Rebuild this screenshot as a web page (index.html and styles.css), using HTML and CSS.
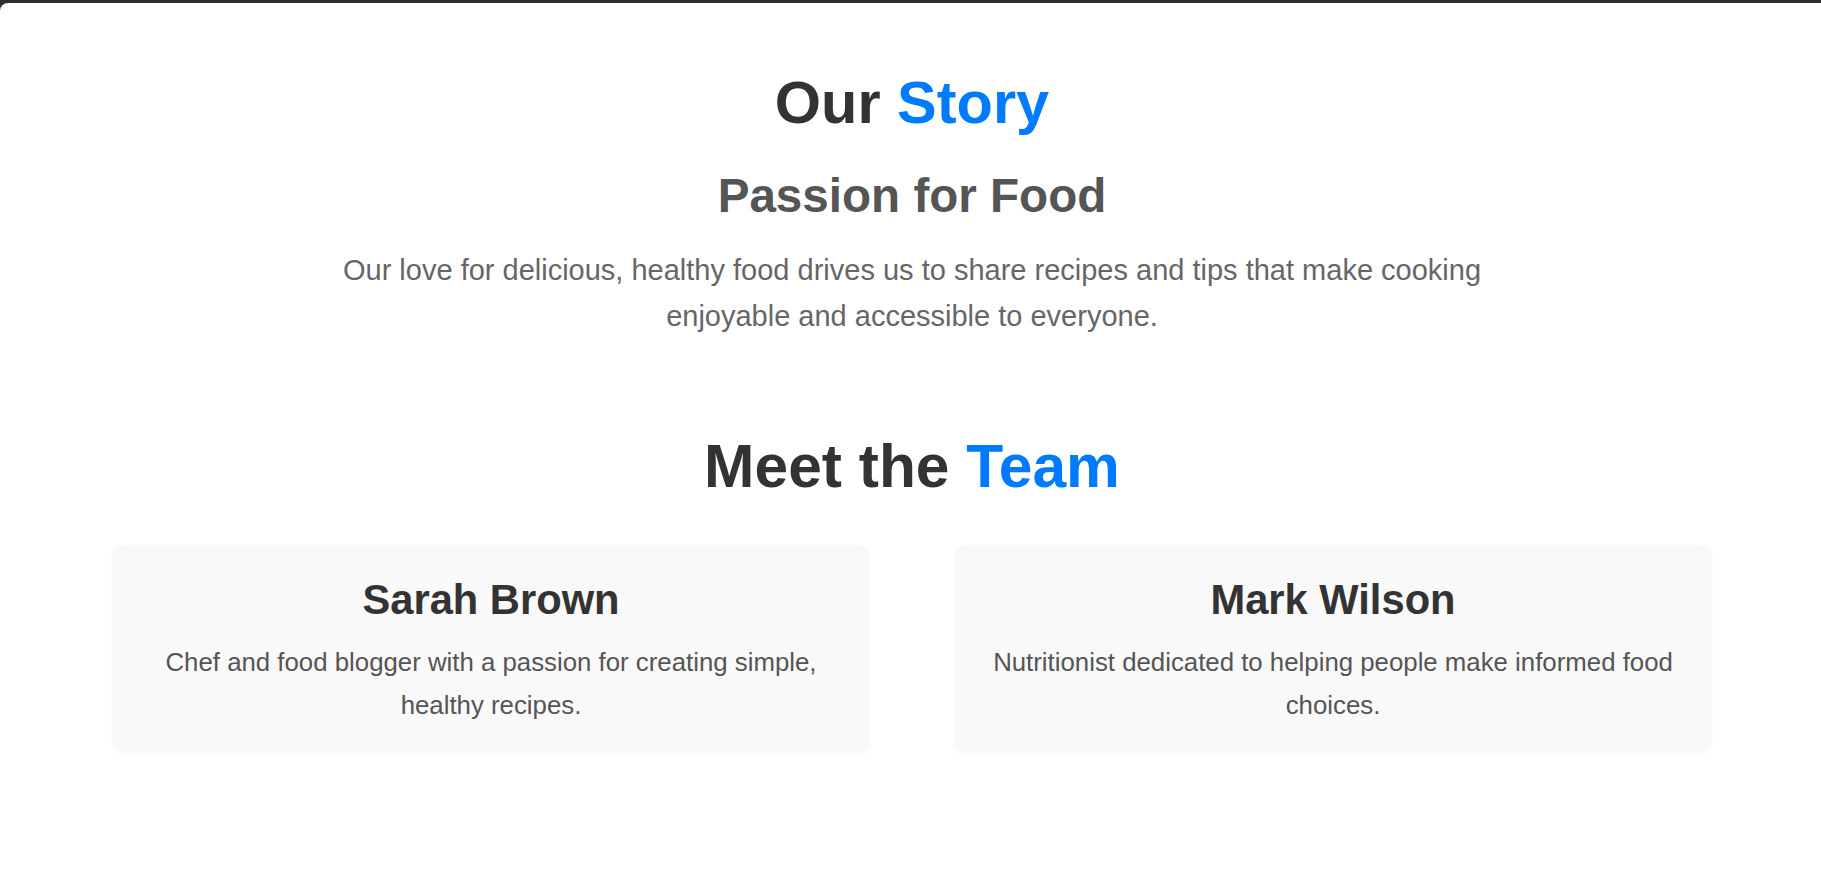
FILE: index.html
```html
<!DOCTYPE html>
<html lang="en">
<head>
<meta charset="utf-8">
<title>About Us</title>
<link rel="stylesheet" href="styles.css">
</head>
<body>
<main class="page">
  <section class="story">
    <h1 class="title">Our <span class="accent">Story</span></h1>
    <h2 class="subtitle">Passion for Food</h2>
    <p class="lead">Our love for delicious, healthy food drives us to share recipes and tips that make cooking enjoyable and accessible to everyone.</p>
  </section>
  <section class="team">
    <h1 class="title title-team">Meet the <span class="accent">Team</span></h1>
    <div class="team-grid">
      <div class="card">
        <h3 class="card-name">Sarah Brown</h3>
        <p class="card-text">Chef and food blogger with a passion for creating simple, healthy recipes.</p>
      </div>
      <div class="card">
        <h3 class="card-name">Mark Wilson</h3>
        <p class="card-text">Nutritionist dedicated to helping people make informed food choices.</p>
      </div>
    </div>
  </section>
</main>
</body>
</html>
```

FILE: styles.css
```css
html, body {
  margin: 0;
  padding: 0;
}
body {
  background: #2e2e2e;
  font-family: "Liberation Sans", Arial, sans-serif;
}
.page {
  margin-top: 3px;
  background: #ffffff;
  border-top-left-radius: 8px;
  min-height: 868px;
  box-sizing: border-box;
  padding: 65px 110px 0 113px;
}
.story {
  text-align: center;
}
.title {
  margin: 0;
  font-size: 59.5px;
  line-height: normal;
  font-weight: 700;
  color: #333333;
}
.title-team {
  font-size: 60.5px;
}
.accent {
  color: #007bff;
}
.subtitle {
  margin: 31px 0 0;
  font-size: 47.6px;
  line-height: normal;
  font-weight: 700;
  color: #555555;
}
.lead {
  margin: 25px auto 0;
  max-width: 1160px;
  font-size: 29px;
  line-height: 45.6px;
  color: #666666;
}
.team {
  margin-top: 92px;
  text-align: center;
}
.team-grid {
  margin-top: 44px;
  display: grid;
  grid-template-columns: 1fr 1fr;
  gap: 86px;
}
.card {
  background: #f9f9f9;
  border-radius: 10px;
  padding: 31px 31px 25.5px;
  box-shadow: 0 2px 4px rgba(0, 0, 0, 0.03);
}
.card-name {
  margin: 0;
  font-size: 41.7px;
  line-height: normal;
  font-weight: 700;
  color: #333333;
}
.card-text {
  margin: 17px 0 0;
  font-size: 25.8px;
  line-height: 42.6px;
  color: #555555;
}
```
